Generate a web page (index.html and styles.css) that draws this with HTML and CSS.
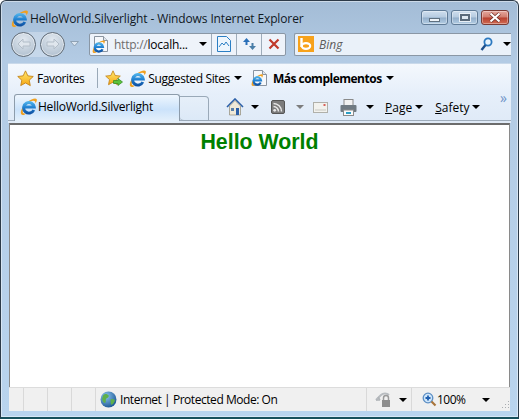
FILE: index.html
```html
<!DOCTYPE html>
<html>
<head>
<title>HelloWorld.Silverlight</title>
<link rel="stylesheet" href="styles.css">
</head>
<body>
<svg class="defs" width="0" height="0">
  <defs>
    <linearGradient id="ieBlue" gradientUnits="userSpaceOnUse" x1="0" y1="2" x2="0" y2="15"><stop offset="0" stop-color="#5cc0f2"/><stop offset=".55" stop-color="#1f7fd0"/><stop offset="1" stop-color="#0f4fa0"/></linearGradient>
    <linearGradient id="starFill" x1="0" y1="0" x2="0" y2="1"><stop offset="0" stop-color="#ffea70"/><stop offset="1" stop-color="#f5a512"/></linearGradient>
    <radialGradient id="globeFill" cx="0.35" cy="0.3" r="0.8"><stop offset="0" stop-color="#8cc4ee"/><stop offset="1" stop-color="#14508f"/></radialGradient>
    <symbol id="ie" viewBox="0 0 16 16">
      <path d="M1.200 15.300C-.5 13 3 7 7 3.800 10.500 1 14.500-.3 15.600 1c.7 1-.1 2.800-1.100 4 .1-1.800-.7-2.600-2.200-2.400C9 3 4.500 7 3 11c-.7 2-.5 3.400 1 3.600 1 .1 2-.3 2.500-.6-2 1.800-4.100 2.600-5.300 1.300z" fill="#f0a020"/>
      <path d="M13 11.300A5 5 0 1 1 13.400 8.500H4.500" fill="none" stroke="url(#ieBlue)" stroke-width="2.800"/>
    </symbol>
    <symbol id="star" viewBox="0 0 16 16">
      <path d="M8 .8l2.200 4.700 5.100.6-3.800 3.500 1 5.100L8 12.200l-4.500 2.500 1-5.100L.7 6.100l5.100-.6z" fill="url(#starFill)" stroke="#c07f14" stroke-width=".8"/>
    </symbol>
    <symbol id="page" viewBox="0 0 14 16">
      <path d="M.5.500h9l4 4v11H.5z" fill="#f6f8fb" stroke="#8a94a0"/>
      <path d="M9.500.500v4h4" fill="#dfe5ec" stroke="#8a94a0"/>
    </symbol>
  </defs>
</svg>

<div class="window">
  <div class="titlebar">
    <svg class="ico17"><use href="#ie"/></svg>
    <span class="title">HelloWorld.Silverlight - Windows Internet Explorer</span>
    <div class="caption">
      <div class="capbtn"><span class="min-glyph"></span></div>
      <div class="capbtn"><span class="max-glyph"></span></div>
      <div class="capbtn closebtn">
        <svg width="14" height="11" viewBox="0 0 14 11"><path d="M2.500 1.500l9 8M11.500 1.500l-9 8" stroke="#6b2a22" stroke-width="3.600" fill="none"/><path d="M2.500 1.500l9 8M11.500 1.500l-9 8" stroke="#fff" stroke-width="2.200" fill="none"/></svg>
      </div>
    </div>
  </div>

  <div class="navbar">
    <div class="navpill">
      <div class="round"><svg width="14" height="12" viewBox="0 0 14 12"><path d="M1 6l5-5v3h7v4H6v3z" fill="#dfe6ed" stroke="#b2bdc8"/></svg></div>
      <div class="round"><svg width="14" height="12" viewBox="0 0 14 12"><path d="M13 6L8 1v3H1v4h7v3z" fill="#dfe6ed" stroke="#b2bdc8"/></svg></div>
    </div>
    <svg class="navdrop" width="9" height="6" viewBox="0 0 9 6"><path d="M.5.500h8L4.500 5z" fill="#dce6f0" stroke="#8fa2b5"/></svg>
    <div class="addr">
      <div class="addr-ico">
        <svg class="pg" width="14" height="16"><use href="#page"/></svg>
        <svg class="pg-e" width="13" height="13"><use href="#ie"/></svg>
      </div>
      <span class="url"><span class="url-dim">http://</span>localh...</span>
      <span class="tri addr-tri"></span>
      <div class="addr-btn">
        <svg width="14" height="16" viewBox="0 0 14 16"><path d="M.5.500h9l4 4v11H.5z" fill="#eef6fd" stroke="#2b7fc4"/><path d="M2 11l3-4 2 2 2-3 3 4" fill="none" stroke="#2b7fc4"/></svg>
      </div>
      <div class="addr-btn">
        <svg width="15" height="14" viewBox="0 0 15 14"><path d="M1 5l3.500-4L8 5H5.500v3H3.500V5z" fill="#2a6fb8"/><path d="M14 9l-3.500 4L7 9h2.500V6h2v3z" fill="#4a7ea8"/></svg>
      </div>
      <div class="addr-btn stop">
        <svg width="12" height="12" viewBox="0 0 12 12"><path d="M1.500 1.500l9 9M10.500 1.500l-9 9" stroke="#c0392b" stroke-width="2.200" fill="none"/></svg>
      </div>
    </div>
    <div class="search">
      <div class="bing">
        <svg width="16" height="16" viewBox="0 0 16 16"><path d="M3.500 2v9" fill="none" stroke="#fff" stroke-width="2.400"/><ellipse cx="8" cy="10" rx="4.200" ry="2.800" fill="none" stroke="#fff" stroke-width="2.200"/></svg>
      </div>
      <span class="bing-text">Bing</span>
      <svg class="lens" width="13" height="15" viewBox="0 0 13 15"><circle cx="8" cy="5" r="3.600" fill="#e8f4fd" stroke="#2c79c0" stroke-width="1.800"/><path d="M5.500 8l-4 5" stroke="#1c4f8c" stroke-width="2.400"/></svg>
      <span class="tri search-tri"></span>
    </div>
  </div>

  <div class="chrome">
    <div class="favbar">
      <svg class="ico17"><use href="#star"/></svg>
      <span class="fav-label">Favorites</span>
      <div class="sep"></div>
      <div class="add-fav">
        <svg class="ico16"><use href="#star"/></svg>
        <svg class="arrow" width="10" height="8" viewBox="0 0 10 8"><path d="M.5 2.500h4.500V.5L9.500 4 5 7.500v-2H.5z" fill="#5cc23c" stroke="#2f8a1e" stroke-width=".7"/></svg>
      </div>
      <svg class="ico17 sites-ico"><use href="#ie"/></svg>
      <span class="sites-label">Suggested Sites</span>
      <span class="tri fav-tri"></span>
      <div class="addr-ico more-ico">
        <svg class="pg" width="14" height="16"><use href="#page"/></svg>
        <svg class="pg-e" width="12" height="12"><use href="#ie"/></svg>
      </div>
      <b class="more-label">Más complementos</b>
      <span class="tri fav-tri"></span>
    </div>

    <div class="tabbar">
      <div class="tab">
        <svg class="ico17"><use href="#ie"/></svg>
        <span>HelloWorld.Silverlight</span>
      </div>
      <div class="newtab"></div>
      <div class="cmds">
        <svg width="18" height="18" viewBox="0 0 18 18"><path d="M1 9l8-8 8 8" fill="none" stroke="#2b5fa8" stroke-width="1.600"/><path d="M3.500 8L9 2.500 14.500 8v9h-11z" fill="#efe9d8" stroke="#8f8a78" stroke-width=".7"/><rect x="10" y="10" width="3" height="7" fill="#2b5fa8"/><rect x="5" y="10" width="3" height="3" fill="#5a7fa8"/></svg>
        <span class="tri t-home"></span>
        <svg class="cmd-rss" width="14" height="14" viewBox="0 0 14 14"><rect x=".5" y=".5" width="13" height="13" rx="1.500" fill="#7c7c7c" stroke="#555"/><circle cx="3.700" cy="10.300" r="1.400" fill="#e8e8e8"/><path d="M2.500 6.500a5 5 0 0 1 5 5M2.500 3.500a8 8 0 0 1 8 8" fill="none" stroke="#e8e8e8" stroke-width="1.500"/></svg>
        <span class="tri dim t-rss"></span>
        <svg class="cmd-mail" width="15" height="11" viewBox="0 0 15 11"><rect x=".5" y=".5" width="14" height="10" fill="#f2f2ee" stroke="#b0b0aa"/><rect x="10.500" y="2" width="2" height="2" fill="#d8605a"/><path d="M2 8h11" stroke="#c8c8c2"/></svg>
        <svg class="cmd-print" width="17" height="17" viewBox="0 0 17 17"><rect x="4" y=".5" width="9" height="6" fill="#f2f2f2" stroke="#8a8a8a"/><rect x=".5" y="6" width="16" height="7" rx="1" fill="#6f7a82"/><rect x="3.500" y="11" width="10" height="5.500" fill="#fafafa" stroke="#8a8a8a"/><rect x="6" y="13" width="5" height="2" fill="#2c9ec4"/></svg>
        <span class="tri t-print"></span>
        <span class="cmd-text"><u>P</u>age</span>
        <span class="tri t-page"></span>
        <span class="cmd-text safety"><u>S</u>afety</span>
        <span class="tri t-page"></span>
        <span class="chev">»</span>
      </div>
    </div>
  </div>

  <div class="page">
    <h1>Hello World</h1>
  </div>

  <div class="status">
    <div class="cell"></div>
    <div class="cell"></div>
    <div class="cell"></div>
    <div class="cell"></div>
    <div class="zone">
      <svg class="ico17" viewBox="0 0 16 16"><circle cx="8" cy="8" r="7.500" fill="url(#globeFill)"/><path d="M3 4c2-2 4-1 5 0s-1 3-2 3 0 3-1 4-3-2-3-4zM10 8c2-1 4 0 4 1s-2 4-3 4-1-3-1-5z" fill="#5fb04a"/></svg>
      <span>Internet | Protected Mode: On</span>
    </div>
    <div class="lock-cell">
      <svg width="17" height="16" viewBox="0 0 17 16"><path d="M1 8l5-5c2-2 6-2 8 0" fill="none" stroke="#b8bcc0" stroke-width="2"/><path d="M1 8h4M5 8L3 5" stroke="#b0b4b8" stroke-width="1.500" fill="none"/><rect x="7" y="8" width="8" height="7" fill="#8e8e8e"/><path d="M8.500 8V6a2.500 2.500 0 0 1 5 0v2" fill="none" stroke="#9a9a9a" stroke-width="1.500"/></svg>
      <span class="tri"></span>
    </div>
    <div class="zoom-cell">
      <svg width="15" height="15" viewBox="0 0 15 15"><circle cx="6" cy="6" r="4.800" fill="#cfe6fa" stroke="#5d8fc4" stroke-width="1.300"/><path d="M3.500 6h5M6 3.500v5" stroke="#1f5fb0" stroke-width="1.800"/><path d="M9.500 9.500l4 4" stroke="#a8743a" stroke-width="2.200"/></svg>
      <span class="pct">100%</span>
      <span class="tri"></span>
      <svg class="grip" width="10" height="10" viewBox="0 0 10 10"><path d="M8 1h1v1H8zM5 4h1v1H5zM8 4h1v1H8zM2 7h1v1H2zM5 7h1v1H5zM8 7h1v1H8z" fill="#a9adb1"/></svg>
    </div>
  </div>
</div>
</body>
</html>
```

FILE: styles.css
```css
html, body { margin: 0; padding: 0; background: #fff; }
body { width: 519px; height: 419px; overflow: hidden; font-family: "Open Sans", "Noto Sans", sans-serif; font-size: 12px; color: #000; }
svg { display: block; flex: none; }
.defs { position: absolute; }
.ico16 { width: 16px; height: 16px; }
.ico17 { width: 17px; height: 17px; }

.window { width: 519px; height: 419px; box-sizing: border-box; display: flex; flex-direction: column; border: 1px solid #2c3a48; border-bottom-width: 2px; border-bottom-color: #17505c; border-radius: 6px 6px 0 0; background: linear-gradient(#a3bcd6 0, #b3cbe4 60px, #b9d4ee 100%); box-shadow: inset 0 0 0 1px rgba(255,255,255,.45); padding: 0 7px 6px 7px; }

/* title row */
.titlebar { height: 30px; box-sizing: border-box; display: flex; align-items: center; padding: 4px 2px 0 3px; flex: none; }
.title { margin-left: 2px; font-size: 12px; letter-spacing: -.12px; white-space: nowrap; color: #10181f; }
.caption { margin-left: auto; display: flex; gap: 3px; align-self: flex-start; margin-top: 5px; }
.capbtn { width: 27px; height: 15px; box-sizing: border-box; border: 1px solid #5f7a96; border-radius: 3px; background: linear-gradient(#cfdeee 0, #b6cbe0 48%, #93aeca 52%, #b3cde4 100%); display: flex; align-items: center; justify-content: center; box-shadow: inset 0 0 0 1px rgba(255,255,255,.35); }
.closebtn { width: 28px; border-color: #7a3a33; background: linear-gradient(#e5a79c 0, #d07c6d 48%, #b8402e 52%, #d06a52 100%); }
.min-glyph { width: 9px; height: 2px; margin-top: 4px; background: #eef3f8; border: 1px solid #5f7080; }
.max-glyph { width: 6px; height: 3px; background: #dfe8f1; border: 2px solid #5a6a7a; box-shadow: 0 0 0 1px #e8eef5; }

/* back, forward, address, search */
.navbar { height: 24px; display: flex; align-items: center; margin-top: 1px; flex: none; }
.navpill { display: flex; gap: 4px; margin-left: 3px; background: rgba(255,255,255,.28); border-radius: 13px; }
.round { width: 23px; height: 23px; border: 1px solid #5e6a76; border-radius: 50%; background: radial-gradient(circle at 50% 30%, #e2e9f0, #a7b8c9); display: flex; align-items: center; justify-content: center; box-shadow: inset 0 0 0 1px rgba(255,255,255,.5); }
.navdrop { margin-left: 5px; }
.addr { margin-left: 10px; width: 197px; height: 23px; box-sizing: border-box; display: flex; align-items: center; background: #eef3fa; border: 1px solid #8a97a5; border-radius: 2px; }
.addr-ico { position: relative; width: 14px; height: 16px; margin-left: 4px; flex: none; }
.pg-e { position: absolute; left: -2px; top: 4px; }
.url { margin-left: 6px; width: 77px; flex: none; font-size: 12px; letter-spacing: -.25px; white-space: nowrap; }
.url-dim { color: #6d6d6d; }
.addr-tri { margin: 0 4px 0 8px; }
.addr-btn { width: 25px; height: 21px; border-left: 1px solid #9eacba; display: flex; align-items: center; justify-content: center; box-sizing: border-box; }
.stop { width: 24px; }
.search { margin-left: 8px; width: 218px; height: 23px; box-sizing: border-box; display: flex; align-items: center; background: #eaf1f9; border: 1px solid #8a97a5; border-right: none; border-radius: 2px 0 0 2px; }
.bing { width: 16px; height: 16px; margin-left: 3px; background: #f7a21b; display: flex; align-items: center; justify-content: center; }
.bing-text { margin-left: 5px; font-style: italic; color: #5c5c5c; }
.lens { margin-left: auto; }
.search-tri { margin: 0 0 0 10px; }

.tri { display: inline-block; flex: none; width: 0; height: 0; border-style: solid; border-width: 4px 4px 0 4px; border-color: #000 transparent transparent transparent; }
.tri.dim { border-top-color: #7d7d7d; }

/* favorites and tabs */
.chrome { margin-top: 7px; height: 60px; box-sizing: border-box; flex: none; background: linear-gradient(#f4f8fd 0, #e6effa 50%, #dfeaf7 100%); border-top: 1px solid #c9d9ea; }
.favbar { height: 28px; display: flex; align-items: center; padding-left: 9px; white-space: nowrap; letter-spacing: -.38px; }
.fav-label { margin-left: 3px; }
.sep { width: 1px; height: 20px; background: #9aa9b8; margin-left: 13px; }
.add-fav { position: relative; width: 16px; height: 16px; margin-left: 7px; flex: none; }
.arrow { position: absolute; right: -2px; bottom: 0; }
.sites-ico { margin-left: 8px; }
.sites-label { margin-left: 2px; }
.fav-tri { margin-left: 4px; }
.more-ico { margin-left: 11px; }
.more-label { margin-left: 6px; font-weight: 700; letter-spacing: -.5px; }

.tabbar { height: 31px; box-sizing: border-box; display: flex; align-items: flex-start; padding: 2px 0 0 6px; background: linear-gradient(transparent 28px, #9fadbc 28px, #9fadbc 29px, transparent 29px); }
.tab { position: relative; width: 166px; height: 27px; box-sizing: border-box; display: flex; align-items: center; gap: 1px; padding: 0 0 3px 5px; letter-spacing: -.23px; background: linear-gradient(#eef6fe 0, #cbe2fa 55%, #e4f0fb 100%); border: 1px solid #8d9cab; border-bottom: none; border-radius: 3px 3px 0 0; }
.tab::after { content: ""; position: absolute; left: 0; right: 0; top: 100%; height: 2px; background: #e4f0fb; }
.newtab { width: 29px; height: 25px; margin-top: 2px; box-sizing: border-box; background: linear-gradient(#e6eff9, #dce9f7); border: 1px solid #9aa9b8; border-left: none; border-radius: 0 4px 0 4px; }
.cmds { display: flex; align-items: center; height: 28px; flex: 1; padding: 0 0 2px 17px; box-sizing: border-box; position: relative; }
.t-home { margin-left: 7px; }
.cmd-rss { margin-left: 12px; }
.t-rss { margin-left: 11px; }
.cmd-mail { margin-left: 9px; }
.cmd-print { margin-left: 12px; }
.t-print { margin-left: 9px; }
.cmd-text { margin-left: 11px; white-space: nowrap; }
.safety { margin-left: 12px; }
.t-page { margin-left: 3px; }
.chev { position: absolute; right: 4px; top: -6px; color: #6f93c8; font-size: 14px; }

/* page */
.page { margin: 0 1px; height: 264px; flex: none; background: #fff; border-top: 2px solid #6c6c6c; border-left: 1px solid #8a8a8a; border-right: 1px solid #8a8a8a; box-sizing: border-box; }
h1 { margin: 5px 0 0; text-align: center; font-family: "Liberation Sans", Arial, sans-serif; font-size: 21.330px; line-height: 24px; font-weight: 700; color: #008000; }

/* status bar */
.status { height: 24px; flex: none; display: flex; align-items: center; background: #f0f0f0; border-top: 1px solid #dcdcdc; box-sizing: border-box; margin: 0 1px; }
.cell { width: 24px; height: 100%; box-sizing: border-box; border-right: 1px solid #d9d9d9; flex: none; }
.cell:first-child { width: 15px; }
.zone { display: flex; align-items: center; gap: 3px; padding-left: 4px; width: 270px; letter-spacing: -.45px; white-space: nowrap; box-sizing: border-box; height: 100%; flex: none; }
.lock-cell { width: 45px; height: 100%; box-sizing: border-box; border-left: 1px solid #d9d9d9; display: flex; align-items: center; gap: 7px; padding-left: 8px; flex: none; }
.zoom-cell { flex: 1; height: 100%; display: flex; align-items: center; position: relative; border-left: 1px solid #d9d9d9; padding-left: 10px; }
.pct { letter-spacing: -.5px; }
.zoom-cell .tri { margin-left: 16px; }
.grip { position: absolute; right: 0; bottom: 1px; }
```
